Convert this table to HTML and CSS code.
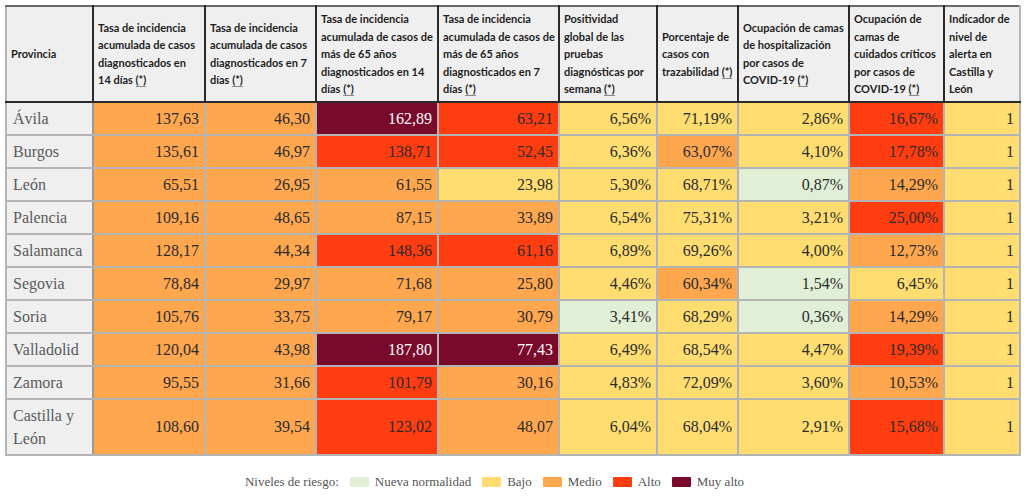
FILE: index.html
```html
<!DOCTYPE html>
<html lang="es">
<head>
<meta charset="utf-8">
<title>Indicadores de riesgo COVID-19 - Castilla y León</title>
<link rel="stylesheet" href="styles.css">
</head>
<body>
<div class="page">
<table class="risk">
  <colgroup>
    <col class="c-prov"><col class="c-1"><col class="c-2"><col class="c-3"><col class="c-4"><col class="c-5"><col class="c-6"><col class="c-7"><col class="c-8"><col class="c-9">
  </colgroup>
  <thead>
    <tr>
      <th>Provincia</th>
      <th>Tasa de incidencia acumulada de casos diagnosticados en 14 días <abbr>(*)</abbr></th>
      <th>Tasa de incidencia acumulada de casos diagnosticados en 7 días <abbr>(*)</abbr></th>
      <th>Tasa de incidencia acumulada de casos de más de 65 años diagnosticados en 14 días <abbr>(*)</abbr></th>
      <th>Tasa de incidencia acumulada de casos de más de 65 años diagnosticados en 7 días <abbr>(*)</abbr></th>
      <th class="th-tight">Positividad global de las pruebas diagnósticas por semana <abbr>(*)</abbr></th>
      <th>Porcentaje de casos con trazabilidad <abbr>(*)</abbr></th>
      <th>Ocupación de camas de hospitalización por casos de COVID-19 <abbr>(*)</abbr></th>
      <th>Ocupación de camas de cuidados críticos por casos de COVID-19 <abbr>(*)</abbr></th>
      <th>Indicador de nivel de alerta en Castilla y León</th>
    </tr>
  </thead>
  <tbody>
    <tr><td class="prov">Ávila</td><td class="m">137,63</td><td class="m">46,30</td><td class="ma">162,89</td><td class="a">63,21</td><td class="b">6,56%</td><td class="b">71,19%</td><td class="b">2,86%</td><td class="a">16,67%</td><td class="b">1</td></tr>
    <tr><td class="prov">Burgos</td><td class="m">135,61</td><td class="m">46,97</td><td class="a">138,71</td><td class="a">52,45</td><td class="b">6,36%</td><td class="m">63,07%</td><td class="b">4,10%</td><td class="a">17,78%</td><td class="b">1</td></tr>
    <tr><td class="prov">León</td><td class="m">65,51</td><td class="m">26,95</td><td class="m">61,55</td><td class="b">23,98</td><td class="b">5,30%</td><td class="b">68,71%</td><td class="n">0,87%</td><td class="m">14,29%</td><td class="b">1</td></tr>
    <tr><td class="prov">Palencia</td><td class="m">109,16</td><td class="m">48,65</td><td class="m">87,15</td><td class="m">33,89</td><td class="b">6,54%</td><td class="b">75,31%</td><td class="b">3,21%</td><td class="a">25,00%</td><td class="b">1</td></tr>
    <tr><td class="prov">Salamanca</td><td class="m">128,17</td><td class="m">44,34</td><td class="a">148,36</td><td class="a">61,16</td><td class="b">6,89%</td><td class="b">69,26%</td><td class="b">4,00%</td><td class="m">12,73%</td><td class="b">1</td></tr>
    <tr><td class="prov">Segovia</td><td class="m">78,84</td><td class="m">29,97</td><td class="m">71,68</td><td class="m">25,80</td><td class="b">4,46%</td><td class="m">60,34%</td><td class="n">1,54%</td><td class="b">6,45%</td><td class="b">1</td></tr>
    <tr><td class="prov">Soria</td><td class="m">105,76</td><td class="m">33,75</td><td class="m">79,17</td><td class="m">30,79</td><td class="n">3,41%</td><td class="b">68,29%</td><td class="n">0,36%</td><td class="m">14,29%</td><td class="b">1</td></tr>
    <tr><td class="prov">Valladolid</td><td class="m">120,04</td><td class="m">43,98</td><td class="ma">187,80</td><td class="ma">77,43</td><td class="b">6,49%</td><td class="b">68,54%</td><td class="b">4,47%</td><td class="a">19,39%</td><td class="b">1</td></tr>
    <tr><td class="prov">Zamora</td><td class="m">95,55</td><td class="m">31,66</td><td class="a">101,79</td><td class="m">30,16</td><td class="b">4,83%</td><td class="b">72,09%</td><td class="b">3,60%</td><td class="m">10,53%</td><td class="b">1</td></tr>
    <tr><td class="prov">Castilla y León</td><td class="m">108,60</td><td class="m">39,54</td><td class="a">123,02</td><td class="m">48,07</td><td class="b">6,04%</td><td class="b">68,04%</td><td class="b">2,91%</td><td class="a">15,68%</td><td class="b">1</td></tr>
  </tbody>
</table>
<div class="legend">
  <span class="legend-title">Niveles de riesgo:</span>
  <span class="legend-item"><span class="sw n"></span>Nueva normalidad</span>
  <span class="legend-item"><span class="sw b"></span>Bajo</span>
  <span class="legend-item"><span class="sw m"></span>Medio</span>
  <span class="legend-item"><span class="sw a"></span>Alto</span>
  <span class="legend-item"><span class="sw ma"></span>Muy alto</span>
</div>
</div>
</body>
</html>
```

FILE: styles.css
```css
html, body {
  margin: 0;
  padding: 0;
  background: #ffffff;
}

.page {
  padding: 5px 5px 0 5px;
}

.risk {
  width: 100%;
  border-collapse: collapse;
  table-layout: fixed;
  border: 2px solid #b4b4b4;
}

.c-prov { width: 87px; }
.c-1 { width: 112px; }
.c-2 { width: 111px; }
.c-3 { width: 122px; }
.c-4 { width: 121px; }
.c-5 { width: 98px; }
.c-6 { width: 81px; }
.c-7 { width: 111px; }
.c-8 { width: 95px; }
.c-9 { width: 76px; }

.risk th {
  background: #efefef;
  font-family: Lato, "Liberation Sans", sans-serif;
  font-weight: 700;
  font-size: 11px;
  line-height: 17.5px;
  color: #1e1e1e;
  text-align: left;
  vertical-align: middle;
  padding: 3px 3px 3px 4px;
  border: 2px solid #2a2a2a;
  border-top: 2px solid #6a6a6a;
}

.risk th.th-tight {
  padding-right: 9px;
}

.risk th:first-child {
  border-left: 2px solid #b4b4b4;
}

.risk th:last-child {
  border-right: 2px solid #b4b4b4;
}

.risk abbr {
  text-decoration: none;
  border-bottom: 1px solid #8a8a8a;
}

.risk td {
  font-family: "Liberation Serif", "DejaVu Serif", serif;
  font-size: 16px;
  line-height: 23px;
  color: #2b2b2b;
  text-align: right;
  padding: 4px 5px 4px 6px;
  border: 2px solid #b4b4b4;
}

.risk td.prov {
  background: #efefef;
  color: #5a5a5a;
  text-align: left;
  border-right: 2px solid #9a9a9a;
}

.n { background: #e1efd6; }
.b { background: #ffdd70; }
.m { background: #ffa74f; }
.a { background: #ff3d11; }
.ma { background: #7a0a2b; }

.risk td.ma { color: #ffffff; }

.legend {
  display: flex;
  justify-content: center;
  align-items: center;
  gap: 11px;
  padding: 17px 35px 0 0;
  font-family: "Liberation Serif", "DejaVu Serif", serif;
  font-size: 13px;
  line-height: 18px;
  color: #555555;
}

.legend-item {
  display: flex;
  align-items: center;
  gap: 6px;
}

.sw {
  display: inline-block;
  width: 19px;
  height: 10px;
  border-radius: 1px;
}
```
